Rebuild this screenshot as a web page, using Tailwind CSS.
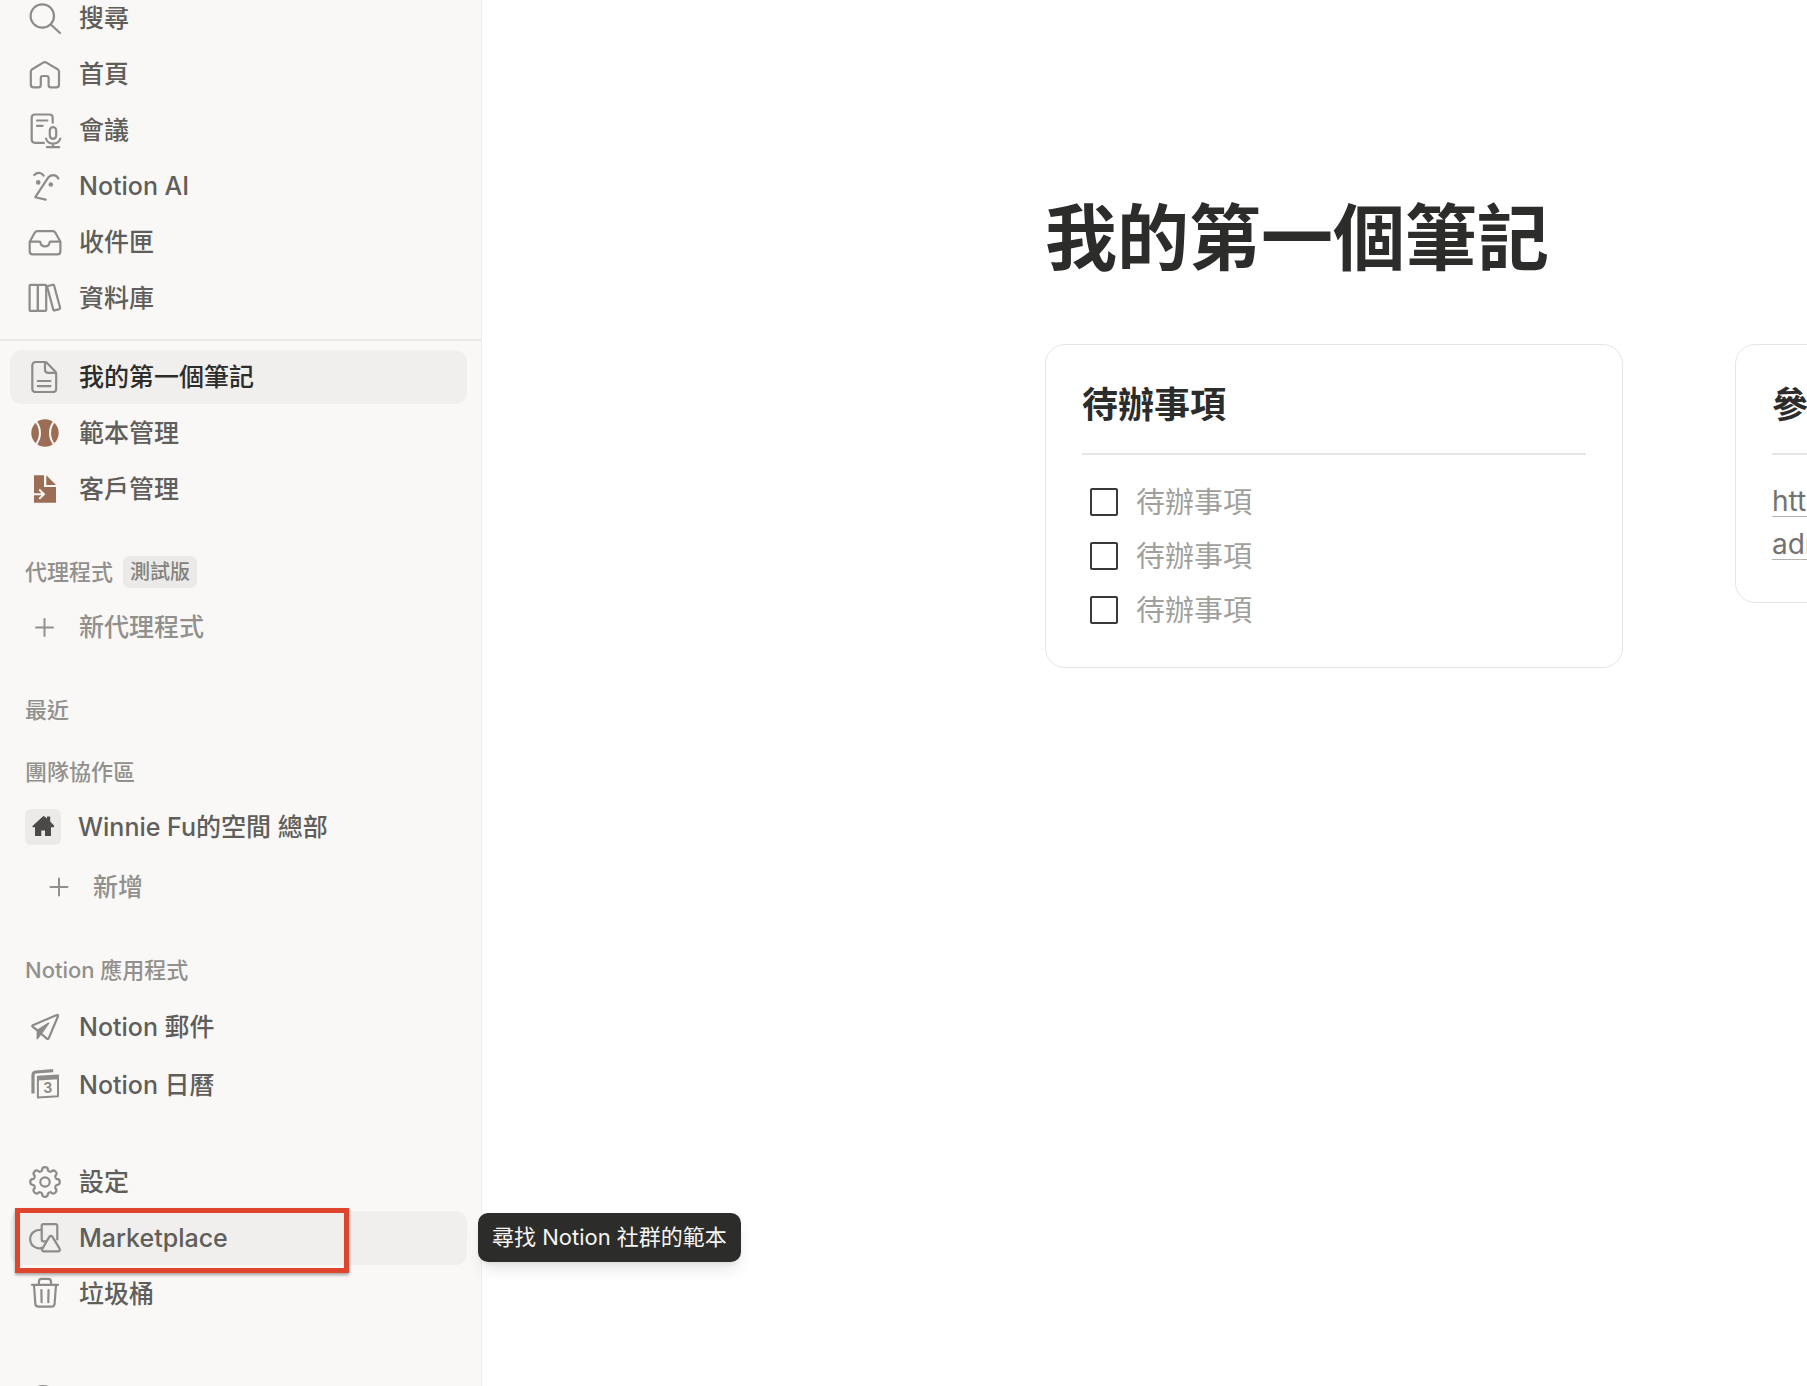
<!DOCTYPE html>
<html lang="zh-Hant">
<head>
    <meta charset="UTF-8">
    <meta name="viewport" content="width=device-width, initial-scale=1.0">
    <title>我的第一個筆記</title>
    <script src="https://cdn.jsdelivr.net/npm/@tailwindcss/browser@4"></script>
</head>
<body class="bg-white font-['Inter','Noto_Sans_CJK_TC',sans-serif]">
    <div class="flex h-screen overflow-hidden">

        <!-- Sidebar -->
        <nav class="w-[482px] shrink-0 border-r border-[#eeeeec] bg-[#f9f8f7] text-[25px] font-medium text-[#5f5e5a]">
            <ul class="-mt-[9px] flex flex-col gap-[2px] px-[10px]">
                <li><a href="#" class="flex h-[54px] items-center gap-[17px] rounded-xl pl-[18px]">
                    <svg class="size-[34px] shrink-0 overflow-visible text-[#8e8c88]" viewBox="0 0 34 34" fill="none" stroke="currentColor" stroke-width="2.2" stroke-linecap="round" stroke-linejoin="round"><circle cx="14.3" cy="15" r="11.7"/><path d="M22.8 23.5 32 32"/></svg>
                    <span class="pt-0.5">搜尋</span>
                </a></li>
                <li><a href="#" class="flex h-[54px] items-center gap-[17px] rounded-xl pl-[18px]">
                    <svg class="size-[34px] shrink-0 overflow-visible text-[#8e8c88]" viewBox="0 0 34 34" fill="none" stroke="currentColor" stroke-width="2.2" stroke-linecap="round" stroke-linejoin="round"><path d="M15.2 5.6 4.2 12.2Q2.8 13 2.8 14.6V27.6Q2.8 30.4 5.6 30.4H10.4Q12.8 30.4 12.8 28V21Q12.8 19 14.8 19H18.6Q20.6 19 20.6 21V28Q20.6 30.4 23 30.4H28.2Q31 30.4 31 27.6V14.6Q31 13 29.6 12.2L18.4 5.6Q16.8 4.6 15.2 5.6Z"/></svg>
                    <span class="pt-0.5">首頁</span>
                </a></li>
                <li><a href="#" class="flex h-[54px] items-center gap-[17px] rounded-xl pl-[18px]">
                    <svg class="size-[34px] shrink-0 overflow-visible text-[#8e8c88]" viewBox="0 0 34 34" fill="none" stroke="currentColor" stroke-width="2.2" stroke-linecap="round" stroke-linejoin="round"><path d="M16 29.8H7Q3.7 29.8 3.7 26.5V4.8Q3.7 1.5 7 1.5H21.4Q24.7 1.5 24.7 4.8V9.7M9 7.5H19.3M9 12.8H14.6"/><rect x="21.8" y="14.2" width="6.4" height="11.6" rx="3.2"/><path d="M18 25.5C19 29 21.5 30.6 25 30.6S31.3 29 32.3 25.5M25 30.6V34M19 34.2H31.2"/></svg>
                    <span class="pt-0.5">會議</span>
                </a></li>
                <li><a href="#" class="flex h-[54px] items-center gap-[17px] rounded-xl pl-[18px]">
                    <svg class="size-[34px] shrink-0 overflow-visible text-[#8e8c88]" viewBox="0 0 34 34" fill="none" stroke="currentColor" stroke-width="2.2" stroke-linecap="round" stroke-linejoin="round"><path d="M6.3 6C9 3 13.5 3.3 15.6 6.6M30.4 9.5C28 5 22.5 5 19.8 9.2L7.3 28.2 17.7 30.6"/><circle cx="10.2" cy="13.4" r="2.3" fill="currentColor" stroke="none"/><circle cx="22.8" cy="15.5" r="2.3" fill="currentColor" stroke="none"/></svg>
                    <span class="pt-0.5">Notion AI</span>
                </a></li>
                <li><a href="#" class="flex h-[54px] items-center gap-[17px] rounded-xl pl-[18px]">
                    <svg class="size-[34px] shrink-0 overflow-visible text-[#8e8c88]" viewBox="0 0 34 34" fill="none" stroke="currentColor" stroke-width="2.2" stroke-linecap="round" stroke-linejoin="round"><path d="M1.7 16.7V26.2Q1.7 29.4 4.9 29.4H29.3Q32.4 29.4 32.4 26.2V16.7L27.4 7.8Q26.5 6.2 24.7 6.2H9.5Q7.7 6.2 6.7 7.8ZM1.7 16.7H11.6Q12.4 16.7 12.5 17.6C13 22.6 21 22.6 21.5 17.6Q21.6 16.7 22.4 16.7H32.4"/></svg>
                    <span class="pt-0.5">收件匣</span>
                </a></li>
                <li><a href="#" class="flex h-[54px] items-center gap-[17px] rounded-xl pl-[18px]">
                    <svg class="size-[34px] shrink-0 overflow-visible text-[#8e8c88]" viewBox="0 0 34 34" fill="none" stroke="currentColor" stroke-width="2.2" stroke-linecap="round" stroke-linejoin="round"><rect x="1.6" y="3.9" width="8.3" height="26" rx="1"/><rect x="9.9" y="3.9" width="8.3" height="26" rx="1"/><path d="M19.9 5 24.8 3.7Q25.8 3.5 26.1 4.5L32.1 26.8Q32.3 27.8 31.4 28.1L26.6 29.4Q25.6 29.6 25.3 28.6L19.3 6.3Q19 5.3 19.9 5Z"/></svg>
                    <span class="pt-0.5">資料庫</span>
                </a></li>
            </ul>

            <ul class="mt-[14px] flex flex-col gap-[2px] border-t-2 border-[#ebeae8] px-[10px] pt-[9px]">
                <li><a href="#" class="mr-1 flex h-[54px] items-center gap-[17px] rounded-xl bg-[#f0efed] pl-[18px] text-[#2c2c2b]">
                    <svg class="size-[34px] shrink-0 overflow-visible text-[#8e8c88]" viewBox="0 0 34 34" fill="none" stroke="currentColor" stroke-width="2.2" stroke-linecap="round" stroke-linejoin="round"><path d="M17 2H8Q4.3 2 4.3 5.7V28.4Q4.3 32 8 32H24.6Q28.2 32 28.2 28.4V13.4Q28.2 12.4 27.5 11.7L18.8 2.7Q18 2 17 2V9.6Q17 12.9 20.3 12.9H28M9.8 21H22.4M9.8 26.1H22.4"/></svg>
                    <span class="pt-0.5">我的第一個筆記</span>
                </a></li>
                <li><a href="#" class="flex h-[54px] items-center gap-[17px] rounded-xl pl-[18px]">
                    <svg class="size-[34px] shrink-0" viewBox="0 0 34 34" fill="none"><circle cx="17" cy="17" r="13.7" fill="#9c6d55"/><path d="M6.5 4C13.8 11 13.8 22.8 6.5 29.8M27.5 4C20.2 11 20.2 22.8 27.5 29.8" stroke="#f9f8f7" stroke-width="2"/></svg>
                    <span class="pt-0.5">範本管理</span>
                </a></li>
                <li><a href="#" class="flex h-[54px] items-center gap-[17px] rounded-xl pl-[18px]">
                    <svg class="size-[34px] shrink-0" viewBox="0 0 34 34" fill="none"><path d="M6 3.3H16V15H28V30.7H6ZM18.3 3.3 28 12.9H18.3Z" fill="#9c6d55"/><path d="M6 22.2H15.5M11.2 17.5 16 22.2 11.2 26.9" stroke="#f9f8f7" stroke-width="2"/></svg>
                    <span class="pt-0.5">客戶管理</span>
                </a></li>
            </ul>

            <div class="mt-[38px] flex h-9 items-center gap-[10px] pl-[25px] text-[#91908c]">
                <h2 class="text-[22px]">代理程式</h2>
                <span class="flex h-8 items-center rounded-md bg-[#ebeae8] px-[7px] text-[20px] text-[#84827e]">測試版</span>
            </div>
            <button type="button" class="mt-[10px] flex h-[54px] w-full items-center gap-[17px] pl-7 text-[#91908c]">
                <svg class="size-[34px] shrink-0" viewBox="0 0 34 34" stroke="currentColor" stroke-width="2" stroke-linecap="round"><path d="M8 17.5H25M16.5 9V26"/></svg>
                <span class="pt-0.5">新代理程式</span>
            </button>

            <h2 class="mt-[38px] h-9 pl-[25px] text-[22px]/9 text-[#91908c]">最近</h2>

            <h2 class="mt-[26px] h-9 pl-[25px] text-[22px]/9 text-[#91908c]">團隊協作區</h2>
            <a href="#" class="mt-[10px] flex h-[54px] items-center gap-[17px] pl-[25px]">
                <svg class="size-9 shrink-0 rounded-md bg-[#ebeae8]" viewBox="0 0 36 36" fill="#4b4a47"><path d="M17.8 7.4Q18.7 6.6 19.6 7.4L22 9.6V7.6H25.2V12.6L29 16.5Q29.6 18.3 28.5 18.3H26V27H20V21.5H16.3V27H10V18.3H7.9Q6.8 17.9 7.5 16.9Z"/></svg>
                <span class="pt-0.5">Winnie Fu的空間 總部</span>
            </a>
            <button type="button" class="mt-[6px] flex h-[54px] w-full items-center gap-[17px] pl-[42px] text-[#91908c]">
                <svg class="size-[34px] shrink-0" viewBox="0 0 34 34" stroke="currentColor" stroke-width="2" stroke-linecap="round"><path d="M8.500 17H25.500M17 8.500V25.500"/></svg>
                <span class="pt-0.5">新增</span>
            </button>

            <h2 class="mt-[38px] h-9 pl-[25px] text-[22px]/9 text-[#91908c]">Notion 應用程式</h2>
            <ul class="mt-3 flex flex-col gap-1 px-[10px]">
                <li><a href="#" class="flex h-[54px] items-center gap-[17px] rounded-xl pl-[18px]">
                    <svg class="size-[34px] shrink-0 overflow-visible text-[#8e8c88]" viewBox="0 0 34 34" fill="none" stroke="currentColor" stroke-width="2.2" stroke-linecap="round" stroke-linejoin="round"><path d="M28.8 5 4.8 15.2Q3.8 15.8 4.6 16.7L9.6 20.5 18.8 28.6Q20 29.5 20.7 28.2L30 6.2Q30.2 4.7 28.8 5Z"/><path d="M9.4 20.3 20.5 13.2 13.5 23.3 9.3 28.6Z" fill="currentColor" stroke-width="1.5"/></svg>
                    <span class="pt-0.5">Notion 郵件</span>
                </a></li>
                <li><a href="#" class="flex h-[54px] items-center gap-[17px] rounded-xl pl-[18px]">
                    <svg class="size-[34px] shrink-0 overflow-visible text-[#8e8c88]" viewBox="0 0 34 34" fill="none" stroke="currentColor" stroke-linejoin="round"><path d="M5 25.4V7Q5 4.3 7.6 4L25.2 2.7" stroke-width="3.2"/><path d="M9.9 8.7 30 7.6V28.3L9.9 29.6Z" stroke-width="2"/><path d="M10 10.4 30 9.3" stroke-width="4"/><text x="19.8" y="25.3" text-anchor="middle" font-size="14" font-weight="700" fill="currentColor" stroke="none">3</text></svg>
                    <span class="pt-0.5">Notion 日曆</span>
                </a></li>
            </ul>

            <ul class="mt-[43px] flex flex-col gap-[2px] px-[10px]">
                <li><a href="#" class="flex h-[54px] items-center gap-[17px] rounded-xl pl-[18px]">
                    <svg class="size-[34px] shrink-0 overflow-visible text-[#8e8c88]" viewBox="0 0 34 34" fill="none" stroke="currentColor" stroke-width="2.2" stroke-linecap="round" stroke-linejoin="round"><path d="M28.4 13.95Q31.8 14 31.8 17T28.4 20.05Q27.2 21 27.2 22.9Q29.6 25.2 27.5 27.5T22.9 27.2Q21 27.2 20.05 28.4Q20 31.8 17 31.8T13.95 28.4Q13 27.2 11.1 27.2Q8.8 29.6 6.5 27.5T6.8 22.9Q6.8 21 5.6 20.05Q2.2 20 2.2 17T5.6 13.95Q6.8 13 6.8 11.1Q4.4 8.8 6.5 6.5T11.1 6.8Q13 6.8 13.95 5.6Q14 2.2 17 2.2T20.05 5.6Q21 6.8 22.9 6.8Q25.2 4.4 27.5 6.5T27.2 11.1Q27.2 13 28.4 13.95Z"/><circle cx="17" cy="17" r="4.7"/></svg>
                    <span class="pt-0.5">設定</span>
                </a></li>
                <li class="relative">
                    <a href="#" aria-describedby="tip" class="mr-1 flex h-[54px] items-center gap-[17px] rounded-xl bg-[#f0efed] pl-[18px]">
                        <svg class="size-[34px] shrink-0 overflow-visible text-[#8e8c88]" viewBox="0 0 34 34" fill="none" stroke="currentColor" stroke-width="2.2" stroke-linecap="round" stroke-linejoin="round"><path d="M13.5 9.3A9.1 9.1 0 1 0 14.8 26.5M18 20.3H15.5Q13.7 20.3 13.7 18.5V5Q13.7 3.2 15.5 3.2H27.5Q29.3 3.2 29.3 5V18.5M21.3 15.9 14.4 27.6Q13.4 30.4 16 30.4H29.8Q32.6 30.4 31.6 27.6L24.5 15.9Q22.9 13.8 21.3 15.9Z"/></svg>
                        <span class="pt-0.5">Marketplace</span>
                    </a>
                    <!-- highlight frame -->
                    <div class="pointer-events-none absolute -top-[3px] left-[5px] h-[65px] w-[334px] border-5 border-[#de452c] shadow-[0_2px_3px_rgba(0,0,0,0.35)]"></div>
                    <div id="tip" role="tooltip" class="absolute top-[2px] left-[468px] flex h-[49px] items-center rounded-[10px] bg-[#2c2c2a] px-[14px] text-[22px] font-normal whitespace-nowrap text-[#f5f5f3] shadow-lg/10">尋找 Notion 社群的範本</div>
                </li>
                <li><a href="#" class="flex h-[54px] items-center gap-[17px] rounded-xl pl-[18px]">
                    <svg class="size-[34px] shrink-0 overflow-visible text-[#8e8c88]" viewBox="0 0 34 34" fill="none" stroke="currentColor" stroke-width="2.2" stroke-linecap="round" stroke-linejoin="round"><path d="M4 7.8H30M10.9 7.8V4.6Q10.9 1.9 13.6 1.9H20.3Q23 1.9 23 4.6V7.8M6 7.8 7.3 26.7Q7.5 29.7 10.5 29.7H23.4Q26.4 29.7 26.6 26.7L28 7.8M13.4 13 13.6 25.2M20.5 13 20.3 25.2"/></svg>
                    <span class="pt-0.5">垃圾桶</span>
                </a></li>
            </ul>
            <a href="#" aria-label="說明" class="mt-16 block pl-[27px]">
                <svg class="size-[34px] text-[#8e8c88]" viewBox="0 0 34 34" fill="none" stroke="currentColor" stroke-width="2"><circle cx="16" cy="16" r="15"/></svg>
            </a>
        </nav>

        <!-- Page -->
        <main class="min-w-0 flex-1 overflow-hidden pt-[195px] pl-[563px] text-[#2c2c2b]">
            <h1 class="text-7xl/[86px] font-bold whitespace-nowrap">我的第一個筆記</h1>
            <div class="mt-[63px] flex items-start gap-[112px]">
                <section class="w-[578px] shrink-0 rounded-[20px] border border-[#e6e5e3] px-9 pt-[37px] pb-[30px]">
                    <h2 class="text-4xl/[46px] font-bold">待辦事項</h2>
                    <hr class="mt-[25px] border-t-2 border-[#e6e5e3]">
                    <ul class="mt-5 text-[29px] text-[#a09f9b]">
                        <li><label class="flex h-[54px] items-center gap-[18px] pl-2"><input type="checkbox" class="size-7 appearance-none rounded-xs border-2 border-[#3a3937]"><span class="pt-0.5">待辦事項</span></label></li>
                        <li><label class="flex h-[54px] items-center gap-[18px] pl-2"><input type="checkbox" class="size-7 appearance-none rounded-xs border-2 border-[#3a3937]"><span class="pt-0.5">待辦事項</span></label></li>
                        <li><label class="flex h-[54px] items-center gap-[18px] pl-2"><input type="checkbox" class="size-7 appearance-none rounded-xs border-2 border-[#3a3937]"><span class="pt-0.5">待辦事項</span></label></li>
                    </ul>
                </section>
                <section class="w-[578px] shrink-0 rounded-[20px] border border-[#e6e5e3] px-9 pt-[37px] pb-9">
                    <h2 class="text-4xl/[46px] font-bold">參考</h2>
                    <hr class="mt-[25px] border-t-2 border-[#e6e5e3]">
                    <p class="mt-[25px] text-[28px]/[43px] text-[#73726e]"><a href="#" class="underline decoration-[#b5b4b1] decoration-1 underline-offset-[5px]">https://<br>admin</a></p>
                </section>
            </div>
        </main>
    </div>
</body>
</html>
